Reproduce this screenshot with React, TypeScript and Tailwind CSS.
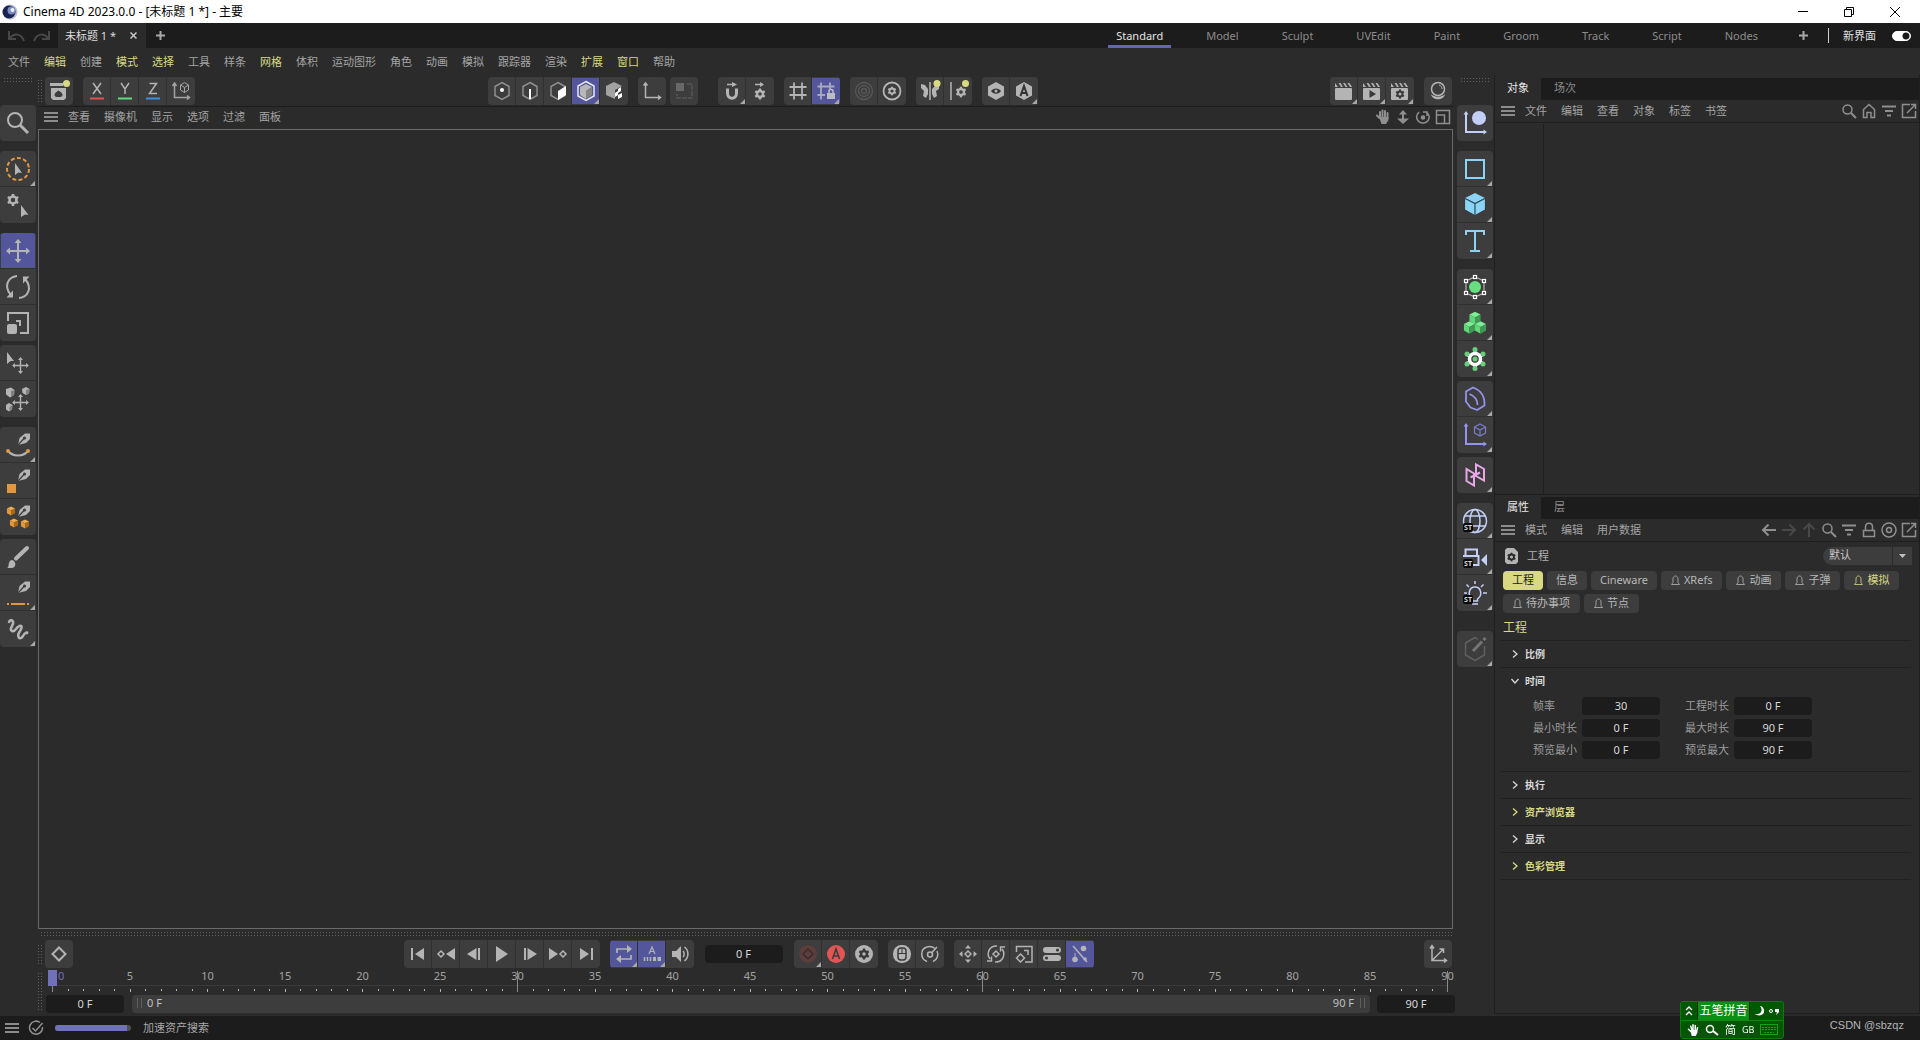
import { Fragment, type ReactNode } from "react";

const menus = [
  { name: "文件" }, { name: "编辑", hot: true }, { name: "创建" }, { name: "模式", hot: true },
  { name: "选择", hot: true }, { name: "工具" }, { name: "样条" }, { name: "网格", hot: true },
  { name: "体积" }, { name: "运动图形" }, { name: "角色" }, { name: "动画" }, { name: "模拟" },
  { name: "跟踪器" }, { name: "渲染" }, { name: "扩展", hot: true }, { name: "窗口", hot: true }, { name: "帮助" },
];

const layouts = ["Standard", "Model", "Sculpt", "UVEdit", "Paint", "Groom", "Track", "Script", "Nodes"];

const chips = [
  { name: "工程", active: true }, { name: "信息" }, { name: "Cineware" }, { name: "XRefs", bell: true },
  { name: "动画", bell: true }, { name: "子弹", bell: true }, { name: "模拟", bell: true, hot: true },
  { name: "待办事项", bell: true }, { name: "节点", bell: true },
];

const timeFields = [
  ["帧率", "30"], ["工程时长", "0 F"],
  ["最小时长", "0 F"], ["最大时长", "90 F"],
  ["预览最小", "0 F"], ["预览最大", "90 F"],
];

const majors = Array.from({ length: 18 }, (_, i) => i * 5);

/* ---------- shared drawing pieces ---------- */

const Gear = ({ x, y, r = 3, fill = "#b4b4b4", w = 2 }: { x: number; y: number; r?: number; fill?: string; w?: number }) => (
  <g transform={`translate(${x} ${y})`}>
    <circle r={r} fill="none" stroke={fill} strokeWidth={w} />
    {[0, 60, 120, 180, 240, 300].map((a) => (
      <rect key={a} x={-w / 2} y={-r - w} width={w} height={w * 1.2} fill={fill} transform={`rotate(${a})`} />
    ))}
  </g>
);

const Nib = () => (
  <g>
    <path d="M18 18 19.500 11 25 6.500 30 6.500 30 12 26 16Z" fill="#b4b4b4" />
    <path d="M18 18 24 11.500" stroke="#3d3d3d" strokeWidth="1.200" />
    <circle cx="24.500" cy="11" r="1.600" fill="#3d3d3d" />
  </g>
);

const Cube = ({ x, y, s, top, left, right }: { x: number; y: number; s: number; top: string; left: string; right: string }) => (
  <g transform={`translate(${x} ${y}) scale(${s})`}>
    <path d="M0-10 9-5.500 0-1-9-5.500Z" fill={top} />
    <path d="M-9-5.500 0-1V10L-9 5Z" fill={left} />
    <path d="M9-5.500 0-1V10L9 5Z" fill={right} />
  </g>
);

const Badge = () => (
  <g>
    <rect x="6" y="20" width="10" height="9" rx="2" fill="#0a0a0a" />
    <text x="11" y="27" textAnchor="middle" fontSize="7" fontWeight="700" fill="#d8d8d8">ST</text>
  </g>
);

const MoveCross = () => (
  <g>
    <path d="M0-9V9M-9 0H9" stroke="#b4b4b4" strokeWidth="2" />
    <path d="M0-12-3.500-8H3.500ZM0 12-3.500 8H3.500ZM-12 0-8-3.500V3.500ZM12 0 8-3.500V3.500Z" fill="#b4b4b4" />
  </g>
);

const Hex = ({ stroke = "#8f8f8f" }: { stroke?: string }) => (
  <path d="M14 5.500 21 9.500V18.500L14 22.500 7 18.500V9.500Z" fill="none" stroke={stroke} strokeWidth="1.500" />
);

const Menu = () => (
  <svg width="14" height="10" className="shrink-0"><path d="M0 1H14M0 5H14M0 9H14" stroke="#8c8c8c" strokeWidth="2" /></svg>
);

const Burger = () => <button aria-label="菜单"><Menu /></button>;

type ToolProps = { label: string; active?: boolean; more?: boolean; children: ReactNode };

const Tool = ({ label, active, more, children }: ToolProps) => (
  <button
    aria-label={label}
    className={active
      ? "size-7 bg-[#53569b] shadow-[-1px_0_0_#303030,inset_0_1px_0_#3d3d3d,inset_0_-1px_0_#3d3d3d]"
      : "size-7 shadow-[-1px_0_0_#303030]"}
  >
    <svg width="28" height="28" viewBox="0 0 28 28" fill="none">
      {children}
      {more && <path d="M27 22V27H22Z" fill="#a8a8a8" />}
    </svg>
  </button>
);

const SideTool = ({ label, active, more, children }: ToolProps) => (
  <button
    aria-label={label}
    className={active
      ? "size-9 bg-[#53569b] shadow-[0_-1px_0_#303030,inset_1px_0_0_#3d3d3d,inset_-1px_0_0_#3d3d3d]"
      : "size-9 shadow-[0_-1px_0_#303030]"}
  >
    <svg width="36" height="36" viewBox="0 0 36 36" fill="none">
      {children}
      {more && <path d="M35 30V35H30Z" fill="#a8a8a8" />}
    </svg>
  </button>
);

const Group = ({ children }: { children: ReactNode }) => (
  <div className="flex h-7 shrink-0 overflow-hidden rounded bg-[#3d3d3d]">{children}</div>
);

const SideGroup = ({ children }: { children: ReactNode }) => (
  <div className="flex w-9 shrink-0 flex-col overflow-hidden rounded bg-[#3d3d3d]">{children}</div>
);

const Grip = ({ className }: { className: string }) => (
  <div className={`shrink-0 bg-[conic-gradient(from_270deg_at_1px_1px,#606060_25%,transparent_0)] bg-[length:3px_3px] ${className}`} />
);

const Glyph = ({ label, dim, children }: { label: string; dim?: boolean; children: ReactNode }) => (
  <button aria-label={label} className={dim ? "text-[#484848]" : "text-[#8f8f8f]"}>
    <svg width="16" height="16" viewBox="0 0 16 16" fill="none" stroke="currentColor" strokeWidth="1.500">{children}</svg>
  </button>
);

const SearchGlyph = () => <Glyph label="搜索"><circle cx="6.500" cy="6.500" r="4.500" /><path d="M10 10 15 15" strokeWidth="2" /></Glyph>;
const FilterGlyph = () => <Glyph label="过滤"><path d="M1 3.500H15M4 8H12M6 12.500H10" strokeWidth="2" /></Glyph>;
const PopGlyph = () => <Glyph label="新窗口"><path d="M9 1.500H1.500V14.500H14.500V8M10 1.500H14.500V6M14 2 6 10" /></Glyph>;

/* ---------- window header ---------- */

const TitleBar = () => (
  <header className="flex h-[23px] shrink-0 items-center bg-white px-[2px] text-xs text-black">
    <svg width="16" height="16" viewBox="0 0 16 16">
      <circle cx="8" cy="8" r="7.500" fill="#b9bfd0" />
      <circle cx="7" cy="8" r="6.500" fill="#1b2350" />
      <circle cx="9.500" cy="6.500" r="4" fill="#7c8cc8" />
      <circle cx="10.500" cy="6" r="2" fill="#eef0fa" />
    </svg>
    <h1 className="ml-[5px] flex-1">Cinema 4D 2023.0.0 - [未标题 1 *] - 主要</h1>
    <button aria-label="最小化" className="flex w-[46px] justify-center"><svg width="10" height="10"><path d="M0 4.500H10" stroke="#000" /></svg></button>
    <button aria-label="还原" className="flex w-[46px] justify-center"><svg width="10" height="10" fill="none"><path d="M.5 2.500H7.500V9.500H.5ZM2.500 2V.5H9.500V7.500H8" stroke="#000" /></svg></button>
    <button aria-label="关闭" className="flex w-[46px] justify-center"><svg width="10" height="10"><path d="M0 0 10 10M10 0 0 10" stroke="#000" /></svg></button>
  </header>
);

const Plus = () => (
  <svg width="9" height="9"><path d="M4.500 0V9M0 4.500H9" stroke="#a8a8a8" strokeWidth="2" /></svg>
);

const TabBar = () => (
  <div className="flex h-[25px] shrink-0 items-center bg-[#1c1c1c]">
    <div className="flex w-[58px] gap-2 pl-2 text-[#484848]">
      <button aria-label="撤销"><svg width="17" height="12" fill="none"><path d="M1 1V9H8M2 8C6 3 13 3 16 11" stroke="currentColor" strokeWidth="2" /></svg></button>
      <button aria-label="重做"><svg width="17" height="12" fill="none"><path d="M16 1V9H9M15 8C11 3 4 3 1 11" stroke="currentColor" strokeWidth="2" /></svg></button>
    </div>
    <div className="flex h-full items-center gap-3 bg-[#2b2b2b] px-[7px] text-[#dcdcdc]">
      <span>未标题 1 *</span>
      <button aria-label="关闭标签" className="px-[2px]"><svg width="7" height="7"><path d="M.5.5 6.500 6.500M6.500.5.5 6.500" stroke="#c8c8c8" strokeWidth="1.500" /></svg></button>
    </div>
    <button aria-label="新建" className="ml-[10px]"><Plus /></button>
    <nav className="ml-auto flex h-full gap-[27px]">
      {layouts.map((name) => (
        <button
          key={name}
          className={name === "Standard"
            ? "border-b-[3px] border-[#6367b0] px-2 pt-[4px] text-[#e4e4e4]"
            : "border-b-[3px] border-transparent px-2 pt-[4px] text-[#8c8c8c]"}
        >
          {name}
        </button>
      ))}
    </nav>
    <button aria-label="添加布局" className="ml-[33px]"><Plus /></button>
    <div className="ml-[20px] h-[15px] w-px bg-[#d0d0d0]" />
    <label className="ml-[14px] mr-[9px] flex items-center gap-4 text-[#e0e0e0]">
      新界面
      <input
        type="checkbox"
        defaultChecked
        className="h-[10px] w-[19px] appearance-none rounded-full border border-white bg-white bg-[radial-gradient(circle_at_13px_4px,#1c1c1c_3px,transparent_4px)]"
      />
    </label>
  </div>
);

/* ---------- left tool strip ---------- */

const LeftTools = () => (
  <aside className="flex w-[38px] shrink-0 flex-col">
    <Grip className="ml-1 mt-[3px] h-[4px] w-[28px]" />
    <div className="mt-[23px] flex flex-col gap-[10px]">
      <SideGroup>
        <SideTool label="查找">
          <circle cx="15" cy="15" r="7" stroke="#b4b4b4" strokeWidth="2" />
          <path d="M20 20 28 28" stroke="#b4b4b4" strokeWidth="3" />
        </SideTool>
      </SideGroup>
      <SideGroup>
        <SideTool label="选择" more>
          <circle cx="18" cy="18" r="11" stroke="#e0973f" strokeWidth="2" strokeDasharray="4 2.300" />
          <path d="M15 12 22 22 18.500 21.500 15 24Z" fill="#b4b4b4" />
        </SideTool>
        <SideTool label="选择设置">
          <Gear x={13} y={13} r={3.500} w={2.500} />
          <path d="M21 18 28.500 28 25 27.500 21 30Z" fill="#b4b4b4" />
        </SideTool>
      </SideGroup>
      <div className="flex flex-col gap-1">
        <SideGroup>
          <SideTool label="移动" active><g transform="translate(18 18)"><MoveCross /></g></SideTool>
          <SideTool label="旋转">
            <path d="M17 7C8 8 3.500 17 10.500 25.500M19 29C28 28 32.500 19 25.500 10.500" stroke="#b4b4b4" strokeWidth="2" />
            <path d="M6.500 28.500H13V21.500ZM29.500 7.500H23V14.500Z" fill="#b4b4b4" />
          </SideTool>
          <SideTool label="缩放">
            <path d="M8 16V8H28V28H20" stroke="#b4b4b4" strokeWidth="2" />
            <path d="M16 16H20V21" stroke="#b4b4b4" strokeWidth="2" />
            <rect x="7" y="19" width="10" height="10" rx="2" fill="#b4b4b4" />
          </SideTool>
        </SideGroup>
        <SideGroup>
          <SideTool label="选择移动">
            <path d="M7 7 14 16 10.500 16 7 19Z" fill="#b4b4b4" />
            <g transform="translate(20.500 20.500) scale(.7)"><MoveCross /></g>
          </SideTool>
          <SideTool label="散布移动">
            <path d="M6 8 11 6.500 14.500 9 14 14 10 16.500 6 13.500Z" fill="#b4b4b4" /><path d="M22 8 26 6 29.500 8 29 12.500 26 14 22.500 12Z" fill="#b4b4b4" /><path d="M6 24 9 22 12.500 24 12 28.500 9 30.500 6 28.500Z" fill="#b4b4b4" />
            <path d="M11 10 14.500 9 14 14 11 16ZM26 9 29.500 8 29 12.500 26 14ZM9.500 26 12.500 24 12 28.500 9.500 30Z" fill="#808080" />
            <g transform="translate(20.500 21.500) scale(.7)"><MoveCross /></g>
          </SideTool>
        </SideGroup>
      </div>
      <div className="flex flex-col gap-1">
        <SideGroup>
          <SideTool label="样条画笔" more>
            <Nib />
            <path d="M8 24C13 30 23 30 28 24" stroke="#b4b4b4" strokeWidth="2" />
            <circle cx="8" cy="24" r="2" fill="#e0973f" /><circle cx="28" cy="24" r="2" fill="#e0973f" />
          </SideTool>
          <SideTool label="多边形画笔"><Nib /><rect x="7" y="21" width="9" height="9" fill="#e0973f" /></SideTool>
          <SideTool label="体积画笔">
            <Nib />
            <Cube x={11} y={12} s={0.45} top="#f0a94c" left="#e0973f" right="#a86818" />
            <Cube x={14} y={24} s={0.45} top="#f0a94c" left="#e0973f" right="#a86818" />
            <Cube x={25} y={25} s={0.45} top="#f0a94c" left="#e0973f" right="#a86818" />
          </SideTool>
        </SideGroup>
        <SideGroup>
          <SideTool label="笔刷">
            <path d="M16 19.500 27 9" stroke="#b4b4b4" strokeWidth="4" strokeLinecap="round" />
            <path d="M7 29C10 28 7 22 12 21 16 22 17 28 12 29Z" fill="#b4b4b4" />
          </SideTool>
          <SideTool label="线条画笔" more>
            <Nib />
            <path d="M7 29H9M11 29H25M27 29H29" stroke="#e0973f" strokeWidth="2" />
          </SideTool>
          <SideTool label="草绘" more>
            <path d="M9 11C11 7 15 10 12 15 9 20 13 22 16 18 20 13 24 14 20 20 16 26 20 30 23 25 25 21 28 21 27 22" stroke="#b4b4b4" strokeWidth="2.500" strokeLinecap="round" />
          </SideTool>
        </SideGroup>
      </div>
    </div>
  </aside>
);

/* ---------- horizontal toolbar over the viewport ---------- */

const Clap = () => (
  <g fill="#b4b4b4">
    <rect x="5" y="11" width="17" height="12" rx="1" />
    <path d="M5 6 8 10H5ZM8.500 6H10.500L13 10H11ZM13 6H15L17.500 10H15.500ZM17.500 6H19.500L22 10H20Z" />
  </g>
);

const Toolbar = () => (
  <div className="flex h-[31px] shrink-0 items-center pr-[3px]">
    <Grip className="mr-[3px] h-[22px] w-[4px]" />
    <Group>
      <Tool label="资产">
        <path d="M5 6H18V9H5Z" fill="#b4b4b4" />
        <path fillRule="evenodd" d="M6 11H21V21L19 23H8L6 21ZM13.500 13.500C11.500 14.500 9.500 16.500 9.500 18 9.500 19.500 10.500 20 13.500 20S17.500 19.500 17.500 18C17.500 16.500 15.500 14.500 13.500 13.500Z" fill="#b4b4b4" />
        <circle cx="21.500" cy="6.500" r="3.500" fill="#d9d984" />
      </Tool>
    </Group>
    <div className="w-[10px]" />
    <Group>
      <Tool label="X 轴"><path d="M10 6 18 17M18 6 10 17" stroke="#b4b4b4" strokeWidth="1.500" /><path d="M7 21.500H21" stroke="#e05252" strokeWidth="2" /></Tool>
      <Tool label="Y 轴"><path d="M10 6 14 12 18 6M14 12V17" stroke="#b4b4b4" strokeWidth="1.500" /><path d="M7 21.500H21" stroke="#5fdc7d" strokeWidth="2" /></Tool>
      <Tool label="Z 轴"><path d="M10.500 6.500H17.500L10.500 16.500H18" stroke="#b4b4b4" strokeWidth="1.500" /><path d="M7 21.500H21" stroke="#3d8fe0" strokeWidth="2" /></Tool>
      <Tool label="坐标系统">
        <path d="M7.500 7V20.500H21M5.500 9 7.500 6 9.500 9M20 18.500 22.500 20.500 20 22.500" stroke="#a4a4a4" strokeWidth="1.500" />
        <path d="M17.500 5.500 21.500 8V13L17.500 15.500 13.500 13V8ZM13.500 8 17.500 10.500 21.500 8M17.500 10.500V15.500" stroke="#a4a4a4" />
      </Tool>
    </Group>
    <div className="flex flex-1 justify-center gap-[10px]">
      <Group>
        <Tool label="点"><Hex /><circle cx="14" cy="13" r="2" fill="#fff" /></Tool>
        <Tool label="边"><Hex /><path d="M14 12V22" stroke="#fff" strokeWidth="2" /></Tool>
        <Tool label="多边形"><Hex /><path d="M14 14 22 9V18L14 23Z" fill="#fff" /></Tool>
        <Tool label="模型" active more>
          <path d="M14 7 20 10 14 14V22L8 18V10Z" fill="#b8b8b8" /><path d="M20 10V18L14 22V14Z" fill="#858585" />
          <path d="M14 4.500 22 9V19L14 23.500 6 19V9Z" stroke="#e8e8ee" strokeWidth="1.500" />
        </Tool>
        <Tool label="纹理">
          <path d="M14 5 22 9 15 13V22L6 18V9Z" fill="#a2a2a2" />
          <path d="M15 16 18 14V18L15 20ZM18 12 21 10V14L18 16ZM18 18 22 16V20L18 22Z" fill="#fff" />
        </Tool>
      </Group>
      <div className="flex gap-[10px]">
        <Group><Tool label="轴心"><path d="M7.500 6V20.500H22M5.500 8.500 7.500 6 9.500 8.500M20 18.500 22.500 20.500 20 22.500" stroke="#b4b4b4" strokeWidth="1.500" /></Tool></Group>
        <div className="-ml-[6px]">
          <Group><Tool label="视图"><rect x="6" y="6" width="8" height="8" fill="#686868" /><path d="M17 7H22V21H7V17" stroke="#565656" strokeWidth="1.500" strokeDasharray="5 1" /></Tool></Group>
        </div>
      </div>
      <div className="ml-[10px]">
        <Group>
          <Tool label="捕捉" more>
            <path d="M9.500 11.500V16C9.500 23 18.500 23 18.500 16V11.500" stroke="#b4b4b4" strokeWidth="3" />
            <path d="M9 7.500H17" stroke="#b4b4b4" strokeWidth="1.500" /><path d="M14 5 19 7.500 14 10Z" fill="#b4b4b4" />
          </Tool>
          <Tool label="捕捉设置">
            <Gear x={14} y={17} r={3} w={2.500} />
            <path d="M9 7.500H17" stroke="#b4b4b4" strokeWidth="1.500" /><path d="M14 5 18 7.500 14 10Z" fill="#b4b4b4" />
          </Tool>
        </Group>
      </div>
      <Group>
        <Tool label="工作平面"><path d="M10 5.500V22.500M18 5.500V22.500M5.500 10H22.500M5.500 18H22.500" stroke="#b4b4b4" strokeWidth="1.800" /></Tool>
        <Tool label="锁定工作平面" active more>
          <path d="M9 5.500V22.500M18 5.500V12M5.500 9.500H22.500M5.500 18H13" stroke="#a9a9bd" strokeWidth="1.800" />
          <rect x="15" y="16" width="8" height="6" fill="#bcbcc6" /><path d="M17 16V14C17 12 21 12 21 14V16" stroke="#bcbcc6" strokeWidth="1.500" />
        </Tool>
      </Group>
      <Group>
        <Tool label="柔和选择"><g stroke="#575757" strokeWidth="1.300"><circle cx="14" cy="14" r="8.500" /><circle cx="14" cy="14" r="5.500" /><circle cx="14" cy="14" r="2.500" /></g></Tool>
        <Tool label="衰减设置"><circle cx="14" cy="14" r="8.500" stroke="#b4b4b4" strokeWidth="1.800" /><Gear x={14} y={14} r={2.500} w={1.800} /></Tool>
      </Group>
      <Group>
        <Tool label="对称">
          <path d="M14 5V23" stroke="#b4b4b4" strokeWidth="1.500" />
          <path d="M5 7 9 8 12 12V17L10 21 7 19 8 14 5 11ZM23 9 19 9 16 12V17L18 21 21 19 20 14 23 12Z" fill="#b4b4b4" />
          <circle cx="21" cy="6.500" r="3.500" fill="#d9d984" />
        </Tool>
        <Tool label="对称设置"><path d="M7 5V23" stroke="#b4b4b4" strokeWidth="1.500" /><Gear x={17} y={15} r={3} w={2.300} /><circle cx="21.500" cy="6.500" r="3.500" fill="#d9d984" /></Tool>
      </Group>
      <Group>
        <Tool label="显示">
          <path d="M14 5 22 9.500V18.500L14 23 6 18.500V9.500Z" fill="#b4b4b4" />
          <path d="M9 14C11.500 10.500 16.500 10.500 19 14 16.500 17.500 11.500 17.500 9 14Z" fill="#333" /><circle cx="14" cy="14" r="1.500" fill="#b4b4b4" />
        </Tool>
        <Tool label="自动" more>
          <path d="M14 5 22 9.500V18.500L14 23 6 18.500V9.500Z" fill="#b4b4b4" />
          <path d="M10.500 19 14 9 17.500 19M11.500 16H16.500" stroke="#333" strokeWidth="2" />
        </Tool>
      </Group>
    </div>
    <Group>
      <Tool label="渲染视图" more><Clap /></Tool>
      <Tool label="渲染播放" more><Clap /><path d="M11.500 13V21L18 17Z" fill="#3a3a3a" /></Tool>
      <Tool label="渲染设置" more><Clap /><Gear x={14} y={17} r={2.500} w={2} fill="#3a3a3a" /></Tool>
    </Group>
    <div className="w-[10px]" />
    <Group>
      <Tool label="材质">
        <circle cx="14" cy="12" r="6.500" stroke="#b4b4b4" strokeWidth="1.500" /><path d="M15 8C17 8.500 18 10 18 12" stroke="#b4b4b4" />
        <path d="M7 17C8 24 20 24 21 17 18 20.500 10 20.500 7 17Z" fill="#b4b4b4" />
      </Tool>
    </Group>
  </div>
);

const Viewport = () => (
  <section className="mr-[2px] flex flex-1 flex-col border-t border-[#1d1d1d]">
    <div className="flex h-[22px] shrink-0 items-center gap-[14px] pb-[2px] pl-[6px] pr-[2px] text-[#a4a4a4]">
      <div className="-mr-1 flex"><Burger /></div>
      {["查看", "摄像机", "显示", "选项", "过滤", "面板"].map((item) => (
        <button key={item}>{item}</button>
      ))}
      <div className="ml-auto flex gap-1">
        <Glyph label="平移">
          <path d="M4.500 9 2 6.500M5 9V3M7.500 8V1.500M10 8V2M12.500 9V4" strokeWidth="2" strokeLinecap="round" />
          <path d="M4 8H13.500V11L11 15H6.500Z" fill="currentColor" stroke="none" />
        </Glyph>
        <Glyph label="推拉"><path d="M8 3V13" strokeWidth="2" /><path d="M8 1 12 5.500H4ZM8 15 14 9.500H2Z" fill="currentColor" stroke="none" /></Glyph>
        <Glyph label="旋转视图"><path d="M4 3C-1 8 3 14 8 14 14 14 16 7 12 3.500M12 7V3H8" /><circle cx="8" cy="8.500" r="1.500" fill="currentColor" /></Glyph>
        <Glyph label="切换视图"><path d="M1.500 1.500H14.500V14.500H1.500ZM1.500 6H9.500V14.500" /></Glyph>
      </div>
    </div>
    <div className="flex-1 border border-[#6a6a6a]" />
  </section>
);

/* ---------- animation bar ---------- */

const FrameField = ({ label, value }: { label: string; value: string }) => (
  <input
    aria-label={label}
    defaultValue={value}
    className="h-[18px] w-[78px] shrink-0 rounded bg-[#1c1c1c] pb-px text-center text-[#d8d8d8]"
  />
);

const Playback = () => (
  <div className="flex h-7 items-center pr-[3px]">
    <Grip className="mr-[3px] h-[19px] w-[4px]" />
    <Group><Tool label="关键帧"><path d="M14 7.500 20.500 14 14 20.500 7.500 14Z" stroke="#b4b4b4" strokeWidth="2" /></Tool></Group>
    <div className="flex flex-1 items-center justify-center gap-[10px]">
      <Group>
        <Tool label="起点"><path d="M8 8V20" stroke="#b4b4b4" strokeWidth="2" /><path d="M20 8V20L11 14Z" fill="#b4b4b4" /></Tool>
        <Tool label="上一关键帧"><path d="M9 11 12 14 9 17 6 14Z" stroke="#b4b4b4" strokeWidth="1.500" /><path d="M23 8V20L14 14Z" fill="#b4b4b4" /></Tool>
        <Tool label="上一帧"><path d="M16.500 8V20L7 14Z" fill="#b4b4b4" /><path d="M19 8V20" stroke="#b4b4b4" strokeWidth="2" /></Tool>
        <Tool label="播放"><path d="M8 6V22L20 14Z" fill="#b4b4b4" /></Tool>
        <Tool label="下一帧"><path d="M11.500 8V20L21 14Z" fill="#b4b4b4" /><path d="M9 8V20" stroke="#b4b4b4" strokeWidth="2" /></Tool>
        <Tool label="下一关键帧"><path d="M19 11 22 14 19 17 16 14Z" stroke="#b4b4b4" strokeWidth="1.500" /><path d="M5 8V20L14 14Z" fill="#b4b4b4" /></Tool>
        <Tool label="终点"><path d="M20 8V20" stroke="#b4b4b4" strokeWidth="2" /><path d="M8 8V20L17 14Z" fill="#b4b4b4" /></Tool>
      </Group>
      <Group>
        <Tool label="循环" active more>
          <path d="M7 13V9H19M21 15V19H9" stroke="#b4b4b4" strokeWidth="1.700" />
          <path d="M17 5 22 9 17 13ZM11 15 6 19 11 23Z" fill="#b4b4b4" />
        </Tool>
        <Tool label="全部帧" active more>
          <path d="M11 14 14 7 17 14M12 11.500H16" stroke="#b4b4b4" strokeWidth="1.200" />
          <path d="M6.500 17V21M9.500 17V21M12.500 17V21" stroke="#b4b4b4" strokeWidth="1.500" /><path d="M15 17H18V21H15ZM19.500 17H23V21H19.500Z" fill="#b4b4b4" />
        </Tool>
        <Tool label="声音">
          <path d="M6 11H10L15 6V22L10 17H6Z" fill="#b4b4b4" />
          <path d="M17 11C18.500 12.500 18.500 15.500 17 17M18.500 7C23 10.500 23 17.500 18.500 21" stroke="#b4b4b4" strokeWidth="1.500" />
        </Tool>
      </Group>
      <div className="flex px-px"><FrameField label="当前帧" value="0 F" /></div>
      <Group>
        <Tool label="记录" more><circle cx="14" cy="14" r="9" fill="#5c3e3e" /><path d="M14 9 19 14 14 19 9 14Z" stroke="#3a2c2c" strokeWidth="1.500" /></Tool>
        <Tool label="自动关键帧"><circle cx="14" cy="14" r="9" fill="#e25555" /><path d="M10.500 19 14 9 17.500 19M11.500 16H16.500" stroke="#3d3d3d" strokeWidth="1.600" /></Tool>
        <Tool label="关键帧设置"><circle cx="14" cy="14" r="9" fill="#b4b4b4" /><Gear x={14} y={14} r={3} w={2.500} fill="#3a3a3a" /></Tool>
      </Group>
      <Group>
        <Tool label="鼠标记录"><rect x="5" y="5" width="18" height="18" rx="8.500" fill="#b4b4b4" /><rect x="10" y="8" width="8" height="12" rx="3" stroke="#3a3a3a" strokeWidth="1.500" /><path d="M14 8V13M10 13.500H18" stroke="#3a3a3a" /></Tool>
        <Tool label="速度"><path d="M11 21.500C4 19 4 9 11 7 14 6 17 7 19 8.500M21 11C23 15 21 20 17 21.500" stroke="#b4b4b4" strokeWidth="1.500" /><circle cx="14" cy="14.500" r="2.500" stroke="#b4b4b4" strokeWidth="1.500" /><path d="M15.500 13 21 7" stroke="#b4b4b4" strokeWidth="1.500" /></Tool>
      </Group>
      <Group>
        <Tool label="位置"><path d="M14 11 17 14 14 17 11 14Z" stroke="#b4b4b4" strokeWidth="1.500" /><path d="M14 5 17 8.500H11ZM14 23 17 19.500H11ZM5 14 8.500 11V17ZM23 14 19.500 11V17Z" fill="#b4b4b4" /></Tool>
        <Tool label="旋转"><path d="M14 11 17 14 14 17 11 14Z" stroke="#b4b4b4" strokeWidth="1.500" /><path d="M15 6C7 5.500 4 14 8 19M13 22C21 22.500 24 14 20 9M5 21H9.500V16.500M23 7H18.500V11.500" stroke="#b4b4b4" strokeWidth="1.500" /></Tool>
        <Tool label="缩放"><path d="M6.500 12V6.500H22V22H15M14 10.500H18V15" stroke="#b4b4b4" strokeWidth="1.500" /><path d="M10.500 14 14.500 18 10.500 22 6.500 18Z" stroke="#b4b4b4" strokeWidth="1.500" /></Tool>
        <Tool label="参数"><rect x="5" y="7" width="18" height="6" rx="3" fill="#b4b4b4" /><rect x="5" y="15" width="18" height="6" rx="3" fill="#b4b4b4" /><circle cx="19.500" cy="10" r="1.600" fill="#3d3d3d" /><circle cx="8.500" cy="18" r="1.600" fill="#3d3d3d" /></Tool>
        <Tool label="点级别" active><path d="M7 6 21 22" stroke="#b4b4b4" strokeWidth="1.500" /><circle cx="17.500" cy="8.500" r="2.800" fill="#b4b4b4" /><circle cx="9" cy="19.500" r="2.800" fill="#b4b4b4" /><circle cx="19" cy="19" r="1.800" fill="#b4b4b4" /><path d="M9 19V13" stroke="#b4b4b4" /></Tool>
      </Group>
    </div>
    <Group><Tool label="函数曲线"><path d="M8 6V20.500H22M8.500 20 19 9.500M6 8.500 8 5.500 10 8.500M15.500 9H19.500V13M20 18.500 22.500 20.500 20 22.500" stroke="#b4b4b4" strokeWidth="1.500" /></Tool></Group>
  </div>
);

const Ruler = () => (
  <div className="relative mt-[2px] h-[23px] pl-[14px] pr-[7px] text-[#a4a4a4]">
    <div className="absolute left-[10px] top-0 h-4 w-[9px] bg-[#6f72b8]" />
    <div className="flex h-4 items-start border-b border-[#3a3a3a] leading-3">
      {majors.map((f) => (
        <div key={f} className="flex flex-1">
          {f === 0
            ? <span className="ml-[6px] text-[#6f72b8]">0</span>
            : <span className="flex w-px justify-center">{f}</span>}
        </div>
      ))}
      <span className="flex w-px justify-center">90</span>
    </div>
    <div className="relative flex h-[7px] items-end">
      {majors.map((f) => (
        <Fragment key={f}>
          {[0, 1, 2, 3, 4].map((m) => (
            <div key={m} className="flex h-full flex-1 items-start">
              {m > 0
                ? <i className="mt-[3px] h-[2px] w-px bg-[#b0b0b0]" />
                : f === 0
                  ? <i className="h-[6px] w-px bg-[#8a8a8a]" />
                  : f % 30 === 0
                    ? <i className="-mt-[15px] h-[21px] w-px bg-[#8a8a8a]" />
                    : <i className="mt-[3px] h-[3px] w-px bg-[#b0b0b0]" />}
            </div>
          ))}
        </Fragment>
      ))}
      <i className="mb-px h-[21px] w-px bg-[#8a8a8a]" />
    </div>
  </div>
);

const Timeline = () => (
  <section className="shrink-0 pb-[3px]">
    <Grip className="ml-[3px] mr-[2px] mt-[3px] h-[5px]" />
    <div className="mt-[3px]"><Playback /></div>
    <div className="flex">
      <Grip className="mt-[5px] h-[37px] w-[4px]" />
      <div className="-ml-1 min-w-0 flex-1">
        <Ruler />
        <div className="mt-[2px] flex items-center pl-2">
          <FrameField label="最小帧" value="0 F" />
          <div className="ml-2 mr-[7px] flex h-[18px] flex-1 items-center justify-between rounded bg-[#3d3d3d] px-[5px] pb-[2px] text-[#c0c0c0]">
            <span className="flex items-center gap-[5px]"><i className="h-[10px] w-[5px] border-x border-[#5e5e5e]" />0 F</span>
            <span className="flex items-center gap-[6px]">90 F<i className="h-[10px] w-[5px] border-x border-[#5e5e5e]" /></span>
          </div>
          <FrameField label="最大帧" value="90 F" />
        </div>
      </div>
    </div>
  </section>
);

/* ---------- object creation strip ---------- */

const RightTools = () => (
  <aside className="flex w-[39px] shrink-0 flex-col pl-[2px]">
    <Grip className="ml-1 mt-[3px] h-[4px] w-[28px]" />
    <div className="mt-[23px] flex flex-col gap-[10px]">
      <SideGroup>
        <SideTool label="空白">
          <path d="M9 9V27H27" stroke="#c3cff8" strokeWidth="2" /><path d="M9 6 6.500 9.500H11.500ZM30 27 26.500 24.500V29.500Z" fill="#c3cff8" />
          <circle cx="22" cy="13" r="7" fill="#c3cff8" />
        </SideTool>
      </SideGroup>
      <SideGroup>
        <SideTool label="矩形" more><rect x="9" y="9" width="18" height="18" stroke="#8ad4f8" strokeWidth="2" /></SideTool>
        <SideTool label="立方体" more>
          <Cube x={18} y={17} s={1.1} top="#8ad4f8" left="#8ad4f8" right="#8ad4f8" />
          <path d="M8 11.500 18 16.500 28 11.500M18 16.500V28" stroke="#2b4a58" strokeWidth="1.200" />
        </SideTool>
        <SideTool label="文本" more><path d="M9 12V8H27V12M18 8V28M13 28H23" stroke="#8ad4f8" strokeWidth="2" /></SideTool>
      </SideGroup>
      <SideGroup>
        <SideTool label="细分曲面" more>
          <path d="M18 8 27 12V24L18 28 9 24V12Z" stroke="#b4b4b4" strokeWidth="1.200" />
          <circle cx="18" cy="18" r="6" fill="#66e07f" />
          {[[18, 8], [27, 12], [27, 24], [18, 28], [9, 24], [9, 12]].map(([x, y]) => (
            <rect key={`${x}-${y}`} x={x - 1.5} y={y - 1.5} width="3" height="3" fill="#3d3d3d" stroke="#fff" strokeWidth="1.200" />
          ))}
        </SideTool>
        <SideTool label="克隆" more>
          <Cube x={18} y={13} s={0.62} top="#7cee94" left="#5fd678" right="#3f9a54" />
          <Cube x={12.5} y={22.5} s={0.62} top="#7cee94" left="#5fd678" right="#3f9a54" />
          <Cube x={23.5} y={22.5} s={0.62} top="#7cee94" left="#5fd678" right="#3f9a54" />
        </SideTool>
        <SideTool label="体积生成" more>
          <Gear x={18} y={18} r={5.5} w={3.500} fill="#fff" />
          {[[18, 8.5], [26, 13], [26, 23], [18, 27.5], [10, 23], [10, 13], [18, 18]].map(([x, y]) => (
            <circle key={`${x}-${y}`} cx={x} cy={y} r="2.500" fill="#66d07c" />
          ))}
        </SideTool>
      </SideGroup>
      <div className="-mt-[6px] flex flex-col gap-1">
        <SideGroup>
          <SideTool label="变形器" more>
            <path d="M9 10.500 16 6.500C23 9 28 15 27.500 24.500L20 29 13.500 26.500 9 20.500ZM12.500 13C17.500 15 20.500 19 20.500 24" stroke="#9494f0" strokeWidth="1.800" strokeLinejoin="round" />
          </SideTool>
          <SideTool label="域" more>
            <path d="M9 9V27H27" stroke="#9494f0" strokeWidth="2" /><path d="M9 6 6.500 9.500H11.500ZM30 27 26.500 24.500V29.500Z" fill="#9494f0" />
            <path d="M23 7 28.500 10V16L23 19 17.500 16V10ZM17.500 10 23 13 28.500 10M23 13V19" stroke="#7d7dcc" strokeWidth="1.200" />
          </SideTool>
        </SideGroup>
        <SideGroup>
          <SideTool label="场景" more>
            <path d="M9.500 12V24L17 28.500V16.500ZM19 7.500V19L27 23.500V12ZM13.500 20.500 23 15.500" stroke="#e8a8e8" strokeWidth="2" />
          </SideTool>
        </SideGroup>
      </div>
      <SideGroup>
        <SideTool label="天空" more>
          <g stroke="#c3cff8" strokeWidth="1.500"><circle cx="18" cy="18" r="11.500" /><ellipse cx="18" cy="18" rx="5" ry="11.500" /><path d="M8 13H28M8 23H28" /></g>
          <Badge />
        </SideTool>
        <SideTool label="摄像机" more>
          <path d="M8.500 17V10.500H20V17M6 17H21.500V26H14" stroke="#c3cff8" strokeWidth="2" /><path d="M30 15V27L24 21Z" fill="#c3cff8" />
          <Badge />
        </SideTool>
        <SideTool label="灯光" more>
          <path d="M15.500 24C10 20 12 12 18 12S26 20 20.500 24V26H15.500Z" stroke="#c3cff8" strokeWidth="1.500" />
          <path d="M18 6V9M7 18H10M26 18H30M9.500 9.500 12 12M26.500 9.500 24 12M15 29H21" stroke="#c3cff8" strokeWidth="1.500" />
          <Badge />
        </SideTool>
      </SideGroup>
      <div className="mt-[10px]">
        <SideGroup>
          <SideTool label="编辑" more>
            <path d="M21 8.500 18 6.500 8.500 12V24L18 29.500 27.500 24V15" stroke="#606060" strokeWidth="1.500" />
            <path d="M16 20 25 10.500M26.500 9 28.500 7" stroke="#747474" strokeWidth="3" />
          </SideTool>
        </SideGroup>
      </div>
    </div>
  </aside>
);

/* ---------- managers on the right ---------- */

const PanelTabs = ({ tabs }: { tabs: string[] }) => (
  <div className="flex h-[22px] shrink-0 bg-[#1c1c1c]">
    {tabs.map((t, i) => (
      <button key={t} className={i === 0 ? "bg-[#2b2b2b] px-3 pb-[2px] text-[#e8e8e8]" : "px-[13px] pb-[2px] text-[#8c8c8c]"}>{t}</button>
    ))}
  </div>
);

const PanelMenu = ({ items, children }: { items: string[]; children: ReactNode }) => (
  <div className="flex h-[23px] shrink-0 items-center gap-[14px] border-b border-[#1f1f1f] pb-px pl-[6px] pr-[2px] text-[#a4a4a4]">
    <div className="-mr-1 flex"><Burger /></div>
    {items.map((item) => <button key={item}>{item}</button>)}
    <div className="ml-auto flex gap-1">{children}</div>
  </div>
);

const ObjectPanel = () => (
  <section className="flex min-h-0 flex-[420_1_0%] flex-col pb-[2px] pt-[3px]">
    <PanelTabs tabs={["对象", "场次"]} />
    <PanelMenu items={["文件", "编辑", "查看", "对象", "标签", "书签"]}>
      <SearchGlyph />
      <Glyph label="主页"><path d="M2.500 14.500V6.500L8 1.500 13.500 6.500V14.500H10V9.500H6V14.500Z" /></Glyph>
      <FilterGlyph />
      <PopGlyph />
    </PanelMenu>
    <div className="flex flex-1 border-b border-[#1f1f1f] pt-[1px]">
      <div className="w-[49px] border-r border-[#1f1f1f]" />
    </div>
  </section>
);

const Section = ({ name, hot, open, children }: { name: string; hot?: boolean; open?: boolean; children?: ReactNode }) => (
  <div className="border-b border-[#202020]">
    <button className={`flex h-[26px] w-full items-center gap-[6px] pl-[10px] text-[10px] font-bold ${hot ? "text-[#d9d984]" : "text-[#d8d8d8]"}`}>
      <svg width="8" height="8" fill="none" stroke="currentColor" strokeWidth="1.300">
        {open ? <path d="M.5 2 4 6 7.500 2" /> : <path d="M2 .5 6 4 2 7.500" />}
      </svg>
      {name}
    </button>
    {children}
  </div>
);

const AttributePanel = () => (
  <section className="flex min-h-0 flex-[519_1_0%] flex-col">
    <PanelTabs tabs={["属性", "层"]} />
    <PanelMenu items={["模式", "编辑", "用户数据"]}>
      <Glyph label="后退"><path d="M15 8H2M7.500 2.500 2 8 7.500 13.500" strokeWidth="2" /></Glyph>
      <Glyph label="前进" dim><path d="M1 8H14M8.500 2.500 14 8 8.500 13.500" strokeWidth="2" /></Glyph>
      <Glyph label="向上" dim><path d="M8 15V2M2.500 7.500 8 2 13.500 7.500" strokeWidth="2" /></Glyph>
      <SearchGlyph />
      <FilterGlyph />
      <Glyph label="锁定"><path d="M2.500 8.500H13.500V14.500H2.500ZM4.500 8.500V5C4.500 0 11.500 0 11.500 5V8.500" /></Glyph>
      <Glyph label="目标"><circle cx="8" cy="8" r="7" /><circle cx="8" cy="8" r="2.500" /></Glyph>
      <PopGlyph />
    </PanelMenu>
    <div className="flex flex-col pl-2 pr-[7px] pt-[5px]">
      <div className="flex h-[18px] items-center pl-[2px] text-[#b0b0b0]">
        <svg width="13" height="16" viewBox="0 0 13 16">
          <path d="M2 0H9L13 4V14L11 16H2L0 14V2Z" fill="#b4b4b4" /><Gear x={6.5} y={9} r={2.500} w={1.800} fill="#2b2b2b" />
        </svg>
        <span className="ml-[9px]">工程</span>
        <div className="relative ml-auto flex">
          <select aria-label="预设" className="h-[18px] w-[89px] appearance-none rounded-l-full rounded-r bg-[#3d3d3d] pb-[2px] pl-[6px] text-[#c8c8c8]">
            <option>默认</option>
          </select>
          <span className="pointer-events-none absolute right-0 flex h-full w-5 items-center justify-center border-l border-[#2b2b2b]">
            <svg width="7" height="4"><path d="M0 0H7L3.500 4Z" fill="#c0c0c0" /></svg>
          </span>
        </div>
      </div>
      <div className="mt-[6px] flex flex-wrap gap-1">
        {chips.map((c) => (
          <button
            key={c.name}
            className={`flex h-[19px] items-center gap-1 rounded pb-px ${c.bell ? "px-[10px]" : "px-[9px]"} ${
              c.active ? "bg-[#d9d984] text-[#1c1c1c]" : c.hot ? "bg-[#3d3d3d] text-[#d9d984]" : "bg-[#3d3d3d] text-[#b8b8b8]"
            }`}
          >
            {c.bell && (
              <svg width="9" height="10" fill="none" stroke="currentColor" className="opacity-80">
                <path d="M.5 9.500 2 7.500V4C2 0 7 0 7 4V7.500L8.500 9.500Z" />
              </svg>
            )}
            {c.name}
          </button>
        ))}
      </div>
      <h2 className="mt-[5px] h-[22px] text-xs leading-[20px] text-[#d9d984]">工程</h2>
    </div>
    <div className="ml-[6px] mr-2 border-t border-[#202020]">
      <Section name="比例" />
      <Section name="时间" open>
        <div className="grid w-[336px] grid-cols-2 gap-y-1 pb-[12px] pl-[32px] pt-[3px] text-[#9c9c9c]">
          {timeFields.map(([name, value]) => (
            <label key={name} className="flex h-[18px] w-[152px] items-center">
              <span className="w-[49px]">{name}</span>
              <input defaultValue={value} className="h-[18px] w-[78px] rounded bg-[#1c1c1c] pb-px text-center text-[#d8d8d8]" />
            </label>
          ))}
        </div>
      </Section>
      <Section name="执行" />
      <Section name="资产浏览器" hot />
      <Section name="显示" />
      <Section name="色彩管理" hot />
    </div>
  </section>
);

/* ---------- bottom ---------- */

const StatusBar = () => (
  <footer className="flex h-6 shrink-0 items-center bg-[#1c1c1c] pl-[5px] pr-4 text-[#a8a8a8]">
    <Burger />
    <svg width="16" height="16" viewBox="0 0 16 16" fill="none" stroke="#909090" strokeWidth="1.500" className="ml-[9px]">
      <path d="M12 2.500A6.500 6.500 0 1 0 14.500 7M4.500 8 7.500 11 14.500 3" />
    </svg>
    <div className="ml-[11px] h-[6px] w-[76px] overflow-hidden rounded-full bg-[#505050]">
      <div className="h-full w-[95%] bg-[#6f72b8]" />
    </div>
    <span className="ml-3">加速资产搜索</span>
    <span className="mb-[7px] ml-auto font-['Liberation_Sans',sans-serif] text-[#b4b4b4]">CSDN @sbzqz</span>
  </footer>
);

const InputMethod = () => (
  <div className="fixed bottom-px right-[136px] flex h-[38px] w-[104px] flex-col rounded-[3px] border border-[#0a7a0a] bg-[#045504] text-white">
    <div className="flex h-[19px] items-center border-b border-[#0c8a0c]">
      <svg width="16" height="12" fill="none" stroke="#fff" strokeWidth="1.300"><path d="M5 5 8 2 11 5M5 10 8 7 11 10" /></svg>
      <span className="flex h-full w-[54px] items-center justify-center border-x border-[#022c02] bg-[#0a9014] text-xs">五笔拼音</span>
      <svg width="32" height="12" className="ml-px">
        <path d="M9 1C13 6 9 10 4 9 8 12 14 10 13 5 12 2 11 1 9 1Z" fill="#fff" />
        <circle cx="20" cy="6" r="1.500" fill="none" stroke="#fff" /><path d="M24 4H28V7L25 10 26 7H24Z" fill="#fff" />
      </svg>
    </div>
    <div className="flex flex-1 items-center gap-[6px] pl-[6px] text-[11px]">
      <svg width="12" height="12" viewBox="0 0 16 16" stroke="#fff" strokeWidth="2" strokeLinecap="round" fill="#fff"><path d="M2 7 6 11M5 3 7 9M8 1V8M11 2V8M14 5 13 9M6 9H13V11L11 15H7Z" /></svg>
      <svg width="14" height="12" fill="none" stroke="#fff"><circle cx="5" cy="5" r="3.500" strokeWidth="1.500" /><path d="M8 7 13 11" strokeWidth="2" /></svg>
      <span>简</span>
      <span className="text-[9px]">GB</span>
      <svg width="18" height="11" fill="none" stroke="#17a017"><rect x=".5" y=".5" width="17" height="10" /><path d="M2 3.500H16M2 5.500H16M4 8.500H14" strokeDasharray="2 1" /></svg>
    </div>
  </div>
);

export default function App() {
  return (
    <div className="flex h-screen flex-col overflow-hidden bg-[#2b2b2b] font-['Noto_Sans','Noto_Sans_CJK_SC',sans-serif] text-[11px] leading-4">
      <TitleBar />
      <TabBar />
      <nav className="flex h-[27px] shrink-0 items-center gap-[14px] pl-2">
        {menus.map((m) => (
          <button key={m.name} className={m.hot ? "text-[#d9d984]" : "text-[#a4a4a4]"}>{m.name}</button>
        ))}
      </nav>
      <main className="flex min-h-0 flex-1">
        <LeftTools />
        <div className="flex min-w-0 flex-1 flex-col">
          <Toolbar />
          <Viewport />
          <Timeline />
        </div>
        <RightTools />
        <div className="mb-[2px] flex w-[426px] shrink-0 flex-col border-b border-l border-r border-[#1f1f1f]">
          <ObjectPanel />
          <AttributePanel />
        </div>
      </main>
      <StatusBar />
      <InputMethod />
    </div>
  );
}
